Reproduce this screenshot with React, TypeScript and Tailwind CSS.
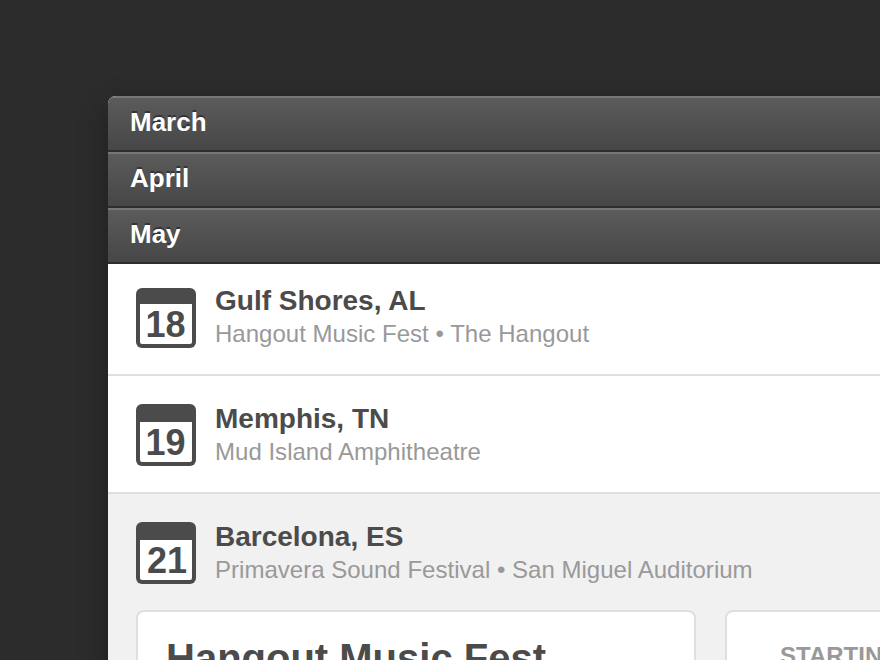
type Show = {
  day: string;
  city: string;
  venue: string;
  row: string;
  icon: string;
  top: string;
  digits: string;
  text: string;
};

const months = ["March", "April", "May"];

const shows: Show[] = [
  {
    day: "18",
    city: "Gulf Shores, AL",
    venue: "Hangout Music Fest • The Hangout",
    row: "h-28 pt-6 border-b-2 border-[#dfdfdf] bg-white",
    icon: "h-[60px]",
    top: "h-4",
    digits: "pr-px",
    text: "-mt-[3px]",
  },
  {
    day: "19",
    city: "Memphis, TN",
    venue: "Mud Island Amphitheatre",
    row: "h-[118px] pt-7 border-b-2 border-[#dfdfdf] bg-white",
    icon: "h-[62px]",
    top: "h-[18px]",
    digits: "pr-px",
    text: "-mt-px",
  },
  {
    day: "21",
    city: "Barcelona, ES",
    venue: "Primavera Sound Festival • San Miguel Auditorium",
    row: "h-[116px] pt-7 bg-[#f1f1f1]",
    icon: "h-[62px]",
    top: "h-[18px]",
    digits: "pl-0.5",
    text: "-mt-px",
  },
];

function MonthBar({ name }: { name: string }) {
  return (
    <div className="h-14 border-t-2 border-b-2 border-t-[#777777] border-b-[#2d2d2d] bg-linear-to-b from-[#5b5b5b] to-[#474747] pl-[22px] text-[26px] leading-[48px] font-bold text-white [text-shadow:0_-2px_0_rgba(0,0,0,0.4)]">
      {name}
    </div>
  );
}

function ShowRow({ show }: { show: Show }) {
  return (
    <div className={`flex gap-[19px] pl-7 ${show.row}`}>
      <div className={`flex w-[60px] shrink-0 flex-col rounded-md bg-[#4b4b4b] px-1 pb-1 ${show.icon}`}>
        <div className={`shrink-0 ${show.top}`} />
        <div className={`h-10 shrink-0 rounded-b-[2px] bg-white text-center text-[36px] leading-[41px] font-bold ${show.digits}`}>
          {show.day}
        </div>
      </div>
      <div className={`whitespace-nowrap ${show.text}`}>
        <div className="text-[28px] leading-8 font-bold">{show.city}</div>
        <div className="mt-[3px] text-2xl leading-7 tracking-[0.02px] text-[#999999]">{show.venue}</div>
      </div>
    </div>
  );
}

export default function App() {
  return (
    <main className="h-[660px] w-[880px] overflow-hidden bg-[#2c2c2c] pt-24 pl-[108px] font-['Liberation_Sans',Arial,sans-serif] text-[#4b4b4b]">
      <div className="w-[1100px] rounded-t-lg bg-[#f1f1f1] shadow-[0_10px_30px_rgba(0,0,0,0.3)]">
        <div className="overflow-hidden rounded-t-lg">
          {months.map((name) => (
            <MonthBar key={name} name={name} />
          ))}
        </div>
        {shows.map((show) => (
          <ShowRow key={show.day} show={show} />
        ))}
        <div className="flex h-[300px] gap-[29px] pl-7 whitespace-nowrap">
          <section className="w-[560px] rounded-lg border-2 border-[#dfdfdf] bg-white pt-[23px] pl-7 text-[40px] leading-[46px] font-bold">
            Hangout Music Fest
          </section>
          <section className="w-[400px] rounded-lg border-2 border-[#dfdfdf] bg-white pt-[31px] pl-[53px] text-2xl leading-[26px] font-bold text-[#999999]">
            STARTING AT
          </section>
        </div>
      </div>
    </main>
  );
}
